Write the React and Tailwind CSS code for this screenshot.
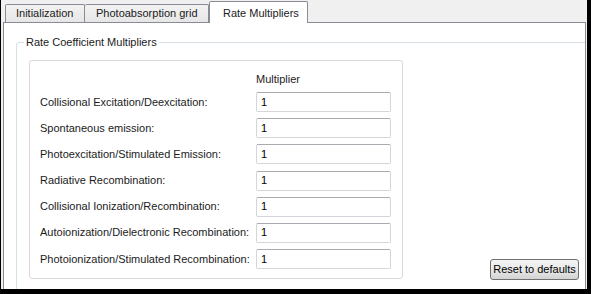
import React from "react";

const rows = [
  "Collisional Excitation/Deexcitation:",
  "Spontaneous emission:",
  "Photoexcitation/Stimulated Emission:",
  "Radiative Recombination:",
  "Collisional Ionization/Recombination:",
  "Autoionization/Dielectronic Recombination:",
  "Photoionization/Stimulated Recombination:",
];

export default function App() {
  return (
    <div className="w-[591px] h-[294px] overflow-hidden border-l border-r-4 border-b-[5px] border-black bg-[#f0f0f0] flex flex-col font-['Liberation_Sans',Arial,sans-serif] text-[11px] leading-[13px] text-[#1b1b1b]">
      {/* tab strip */}
      <div className="flex items-end h-[23px] -mb-px pl-[4px] relative z-10">
        <div className="w-[80px] h-[18px] mb-px border-l border-t border-r border-[#898c95] rounded-t-[2px] bg-linear-to-b from-[#f3f3f3] to-[#e6e6e6] pl-[10px] pt-[2px] whitespace-nowrap">
          Initialization
        </div>
        <div className="w-[124px] h-[18px] mb-px border-t border-r border-[#898c95] rounded-t-[2px] bg-linear-to-b from-[#f3f3f3] to-[#e6e6e6] pl-[11px] pt-[2px] whitespace-nowrap">
          Photoabsorption grid
        </div>
        <div className="w-[99px] h-[22px] border-l border-t border-r border-[#898c95] rounded-t-[2px] bg-white pl-[13px] pt-[5px] whitespace-nowrap">
          Rate Multipliers
        </div>
      </div>
      {/* pane */}
      <div className="flex-1 ml-[2px] mr-[1px] bg-white border-l border-t border-r border-[#898c95] overflow-hidden">
        <fieldset className="mt-[13px] ml-[12px] w-[600px] h-[300px] border border-[#d5dfe5] rounded-[3px]">
          <legend className="ml-[7px] px-[2px] leading-[13px]">Rate Coefficient Multipliers</legend>
          <div className="flex items-end pt-[11px] pl-[12px]">
            <div className="w-[374px] border border-[#d9d9d9] rounded-[3px] bg-white pl-[10px] pt-[12px] pb-[9px]">
              <div className="grid grid-cols-[216px_135px] items-center">
                <div />
                <div className="h-[13px]">Multiplier</div>
              </div>
              <div className="mt-[6px] flex flex-col gap-[6.2px]">
                {rows.map((r) => (
                  <div key={r} className="grid grid-cols-[216px_135px] items-center">
                    <div className="whitespace-nowrap">{r}</div>
                    <div className="h-[20px] border border-[#d4d6da] border-t-[#a9abb0] rounded-[2px] bg-white pl-[4px] flex items-center text-black">
                      1
                    </div>
                  </div>
                ))}
              </div>
            </div>
            <button className="ml-[87px] -mb-px w-[89px] h-[21px] border border-[#707070] rounded-[3px] bg-linear-to-b from-[#f4f4f4] via-[#e9e9e9] to-[#d3d3d3] text-black text-[11px] leading-[13px] whitespace-nowrap flex items-center justify-center">
              Reset to defaults
            </button>
          </div>
        </fieldset>
      </div>
    </div>
  );
}
